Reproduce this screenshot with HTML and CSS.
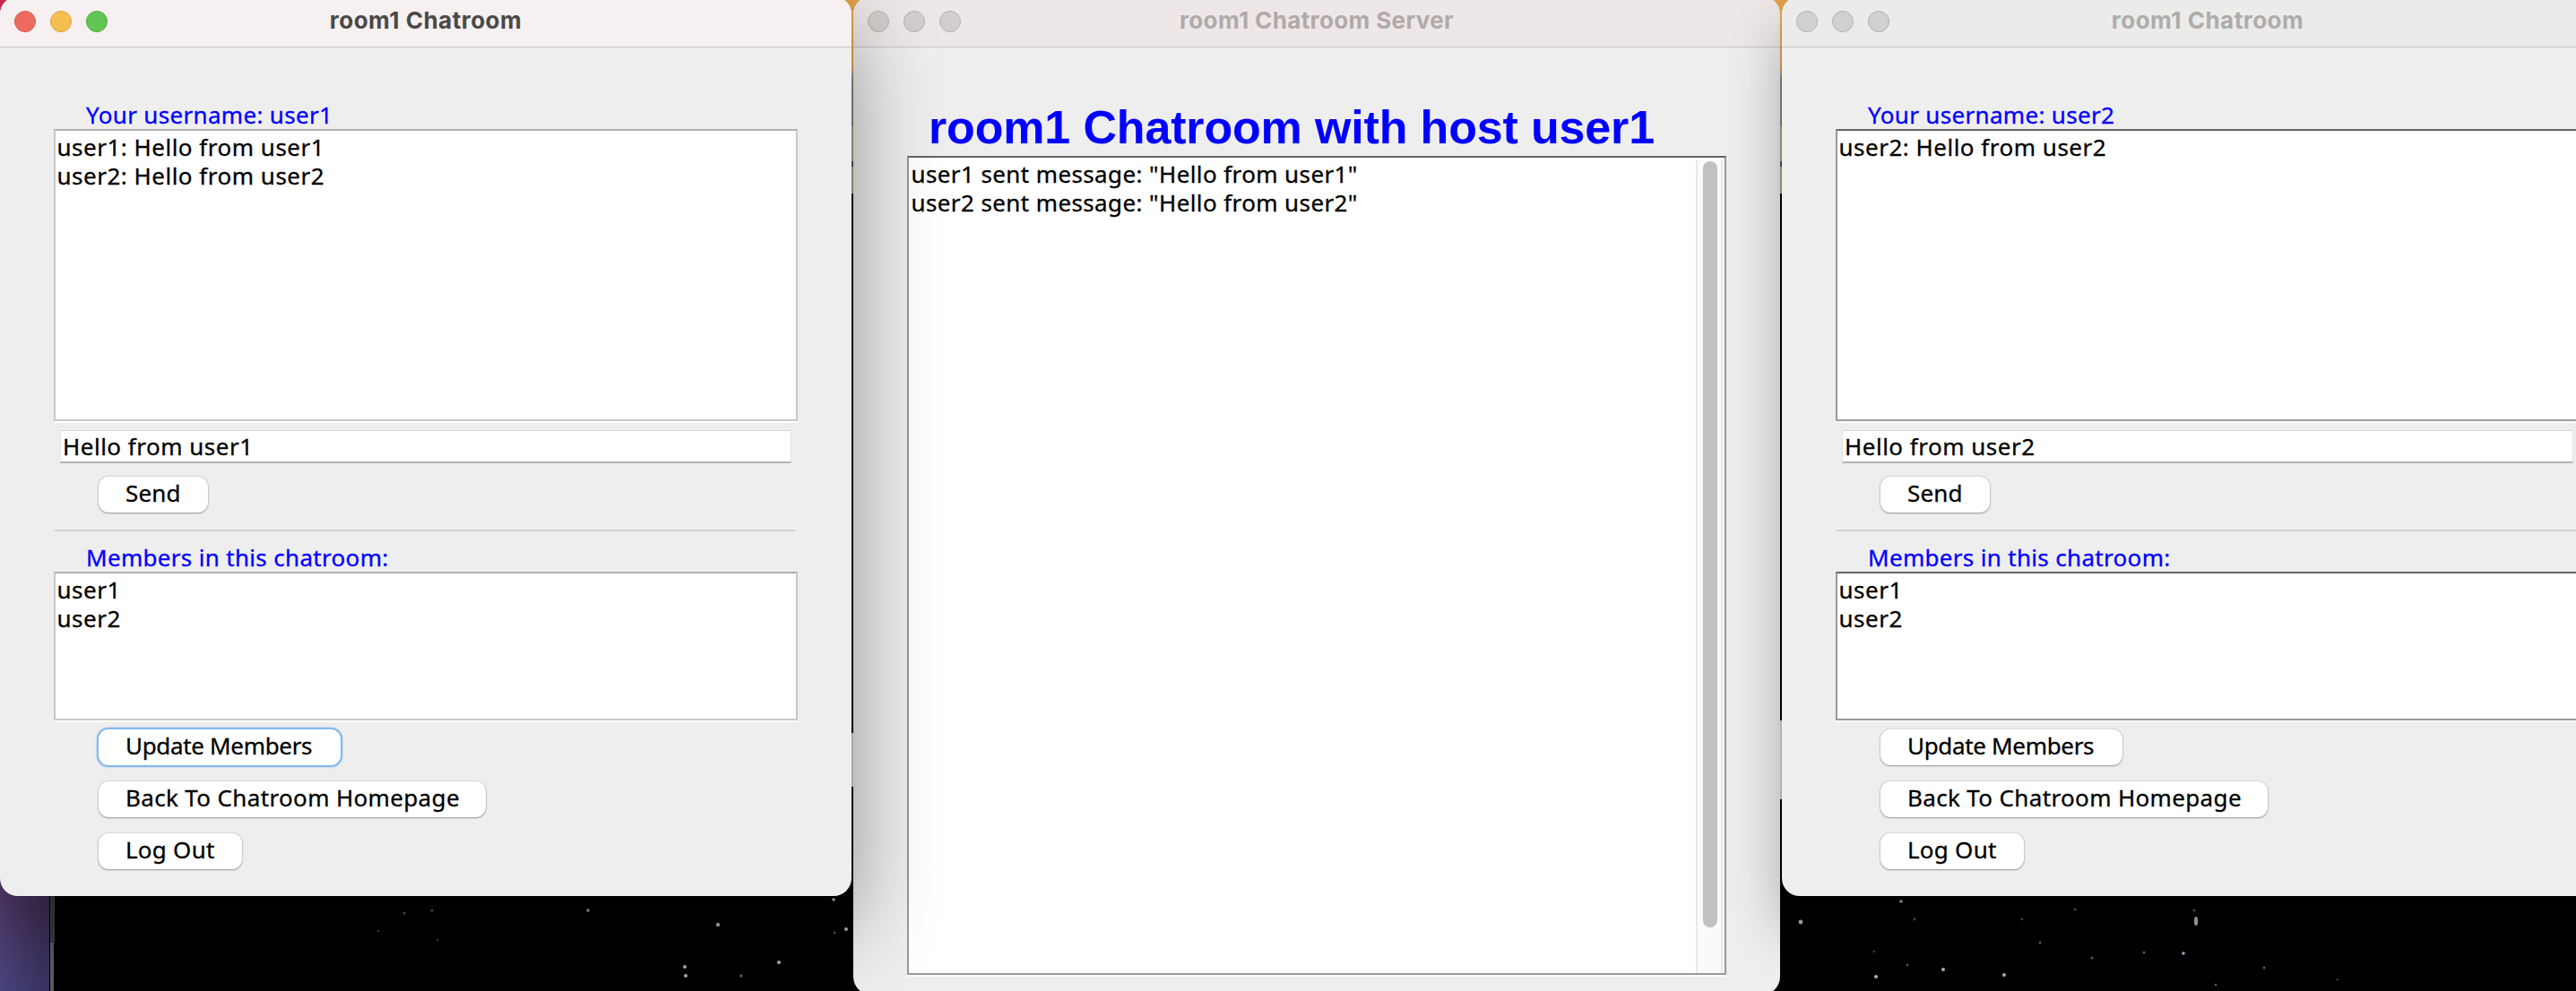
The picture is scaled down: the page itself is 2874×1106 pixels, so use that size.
FILE: index.html
```
<!DOCTYPE html>
<html lang="en">
<head>
<meta charset="utf-8">
<title>room1 Chatroom</title>
<link rel="stylesheet" href="styles.css">
</head>
<body>
<main class="desktop">
  <svg class="wallpaper" width="2874" height="1106" viewBox="0 0 2874 1106" aria-hidden="true">
    <defs>
      <linearGradient id="dusk" x1="0" y1="0" x2="0" y2="1">
        <stop offset="0" stop-color="#583a68"/><stop offset="1" stop-color="#4a4480"/>
      </linearGradient>
      <linearGradient id="edge" x1="0" y1="0" x2="1" y2="0">
        <stop offset="0" stop-color="#000" stop-opacity="0"/><stop offset="1" stop-color="#000" stop-opacity=".25"/>
      </linearGradient>
    </defs>
    <rect width="2874" height="1106" fill="#020102"/>
    <rect width="14" height="24" fill="#d4284e"/>
    <rect y="960" width="55" height="146" fill="url(#dusk)"/>
    <rect y="960" width="55" height="146" fill="url(#edge)"/>
    <rect x="56" y="960" width="5" height="92" fill="#3a3f3f"/>
    <rect x="56" y="1052" width="4" height="54" fill="#5a5f5f"/>
    <g id="gap">
      <rect x="938" width="26" height="78" fill="#e2a24c"/>
      <rect x="950" y="78" width="2" height="8" fill="#a89c88"/>
      <rect x="950" y="86" width="2" height="55" fill="#8d8373"/>
      <rect x="950" y="141" width="2" height="75" fill="#b09f82"/>
      <rect x="950" y="180" width="2" height="6" fill="#4b5060"/>
    </g>
    <use href="#gap" x="1036"/>
    <rect x="950" y="818" width="2" height="60" fill="#cfcfcf"/>
    <rect x="1986" y="804" width="2" height="88" fill="#cfcfcf"/>
    <g fill="#5c5c64">
      <circle cx="451" cy="1019" r="1.5"/><circle cx="482" cy="1016" r="1.5"/><circle cx="422" cy="1039" r="1"/>
      <circle cx="488" cy="1049" r="1"/><circle cx="827" cy="1089" r="1.8"/><circle cx="931" cy="1041" r="1.3"/>
      <circle cx="2136" cy="1026" r="1.4"/><circle cx="2315" cy="1015" r="1.5"/><circle cx="2256" cy="1026" r="1.3"/>
      <circle cx="2448" cy="1016" r="1.5"/><circle cx="2276" cy="1052" r="1.5"/><circle cx="2392" cy="1063" r="1.5"/>
      <circle cx="2334" cy="1069" r="1.5"/><circle cx="2526" cy="1080" r="1.5"/><circle cx="2472" cy="1099" r="1.3"/>
      <circle cx="2128" cy="1077" r="1.2"/><circle cx="2608" cy="1093" r="1"/><circle cx="2091" cy="1062" r="1"/>
    </g>
    <g fill="#adadbd">
      <circle cx="656" cy="1016" r="1.7"/><circle cx="801" cy="1032" r="2.2"/><circle cx="930" cy="1004" r="1.8"/>
      <circle cx="944" cy="1037" r="2"/><circle cx="869" cy="1074" r="2.1"/><circle cx="764" cy="1079" r="2"/>
      <circle cx="765" cy="1089" r="2"/><circle cx="2121" cy="1006" r="1.8"/><circle cx="2009" cy="1029" r="2.4"/>
      <circle cx="2436" cy="1064" r="1.8"/><circle cx="2168" cy="1082" r="2"/><circle cx="2093" cy="1090" r="2.1"/>
      <circle cx="2236" cy="1088" r="2"/><ellipse cx="2450" cy="1028" rx="2.2" ry="5"/>
    </g>
  </svg>

  <section class="window window-server">
    <header class="titlebar">
      <span class="lights"><i class="light"></i><i class="light"></i><i class="light"></i></span>
      <h2 class="title title-long">room1 Chatroom Server</h2>
    </header>
    <div class="pane">
      <h1 class="heading">room1 Chatroom with host user1</h1>
      <div class="textarea log">
        <div class="lines server-lines"><p>user1 sent message: "Hello from user1"</p><p>user2 sent message: "Hello from user2"</p></div>
        <div class="scrollbar"><div class="thumb"></div></div>
      </div>
    </div>
  </section>

  <section class="window window-user1">
    <header class="titlebar">
      <span class="lights"><i class="light close"></i><i class="light minimize"></i><i class="light zoom"></i></span>
      <h2 class="title">room1 Chatroom</h2>
    </header>
    <div class="pane">
      <p class="label">Your username: user1</p>
      <div class="textarea chat"><div class="lines"><p>user1: Hello from user1</p><p>user2: Hello from user2</p></div></div>
      <div class="field">Hello from user1</div>
      <button class="button send">Send</button>
      <hr class="separator">
      <p class="label">Members in this chatroom:</p>
      <div class="textarea members"><div class="lines"><p>user1</p><p>user2</p></div></div>
      <div class="actions">
        <button class="button update focused">Update Members</button>
        <button class="button back">Back To Chatroom Homepage</button>
        <button class="button logout">Log Out</button>
      </div>
    </div>
  </section>

  <section class="window window-user2">
    <header class="titlebar">
      <span class="lights"><i class="light"></i><i class="light"></i><i class="light"></i></span>
      <h2 class="title">room1 Chatroom</h2>
    </header>
    <div class="pane">
      <p class="label">Your username: user2</p>
      <div class="textarea chat"><div class="lines"><p>user2: Hello from user2</p></div></div>
      <div class="field">Hello from user2</div>
      <button class="button send">Send</button>
      <hr class="separator">
      <p class="label">Members in this chatroom:</p>
      <div class="textarea members"><div class="lines"><p>user1</p><p>user2</p></div></div>
      <div class="actions">
        <button class="button update">Update Members</button>
        <button class="button back">Back To Chatroom Homepage</button>
        <button class="button logout">Log Out</button>
      </div>
    </div>
  </section>
</main>
</body>
</html>
```
FILE: styles.css
```
* { box-sizing: border-box; }
body, p, h1, h2 { margin: 0; }
body { overflow: hidden; font: 26px/32px "Noto Sans", "Open Sans", sans-serif; color: #000; }

.desktop { position: relative; width: 2874px; height: 1106px; overflow: hidden; }
.wallpaper { display: block; }

/* Windows */
.window { position: absolute; top: -4px; width: 950px; height: 1004px; border-radius: 20px; background: #eee; }
.window-user1 { left: 0; box-shadow: 0 36px 96px rgba(0, 0, 0, .4); }
.window-user2 { left: 1988px; box-shadow: 0 36px 60px rgba(0, 0, 0, .3); }
.window-server { left: 952px; width: 1034px; height: 1114px; }

.titlebar { display: grid; grid-template-columns: 150px 1fr 150px; align-items: start; height: 57px; padding-top: 4px; border-bottom: 1px solid #c6c5c4; border-radius: 20px 20px 0 0; background: #ecebe9; }
.window-user1 .titlebar { background: #f6f0f0; }
.window-server .titlebar { background: #eee7e7; }
.lights { display: flex; gap: 16px; padding: 12px 0 0 16px; }
.light { width: 24px; height: 24px; border: 1px solid #b3b1b0; border-radius: 50%; background: #d2d1cf; }
.window-server .light { border-color: #b5b0b0; background: #d3cdcd; }
.window-user1 .close { border-color: #d8584d; background: #ec6a5e; }
.window-user1 .minimize { border-color: #d9a33f; background: #f4bf4f; }
.window-user1 .zoom { border-color: #52a942; background: #61c554; }
.title { text-align: center; font: 700 26px/46px Inter, sans-serif; letter-spacing: .5px; color: #aeacab; }
.title-long { letter-spacing: .37px; color: #b0aaaa; }
.window-user1 .title { color: #4a4848; }

/* Contents */
.pane { display: flex; flex-direction: column; align-items: flex-start; padding: 59px 60px 0; -webkit-text-stroke: .3px currentColor; }
.label { margin-left: 36px; color: #00f; letter-spacing: .32px; }
.heading { margin: 0 0 2px 24px; font: 700 52px/60px "Liberation Sans", Arial, sans-serif; letter-spacing: -.16px; white-space: nowrap; color: #00f; -webkit-text-stroke: 0; }

.textarea { display: flex; width: 830px; border: 2px solid #999; border-top-color: #646464; background: #fff; box-shadow: 0 2px #fff; }
.window-user1 .textarea { border-color: #b0b0b0 #c8c8c8 #c8c8c8; }
.lines { flex: 1; padding: 2px 0 0 1.5px; letter-spacing: .5px; }
.server-lines { padding-left: 2.5px; letter-spacing: .39px; }
.chat { height: 326px; }
.members { height: 166px; }
.log { width: 914px; height: 914px; }

.scrollbar { width: 30px; margin: 2px 2px 0 0; padding: 2px 0 0 6px; border: solid #e8e8e8; border-width: 0 2px; background: #fafafa; }
.thumb { width: 16px; height: 855px; border-radius: 8px; background: #c1c1c1; }

.field { width: 816px; height: 37px; margin: 10px 0 15px 7px; padding-left: 2px; border: 1px solid #e2e2e2; border-top-color: #d6d6d6; border-bottom: 2px solid #b4b4b4; background: #fff; line-height: 34px; letter-spacing: .5px; }

.button { height: 40px; margin: 0 0 0 50px; padding: 0 0 4px 30px; border: 0; border-radius: 11px; background: #fff; box-shadow: 0 0 2px rgba(0, 0, 0, .28), 0 1px 2px rgba(0, 0, 0, .3); font: inherit; line-height: 36px; text-align: left; white-space: nowrap; color: #000; -webkit-text-stroke: .3px #000; }
.send { width: 122px; letter-spacing: .2px; }
.update { width: 270px; letter-spacing: -.33px; }
.back { width: 432px; letter-spacing: .35px; }
.logout { width: 160px; letter-spacing: .25px; }
.focused { box-shadow: 0 0 0 2px #85b8ee, 0 0 2px 2px #85b8ee; }
.separator { width: 826px; height: 2px; margin: 19px 0 13px 1px; border: 0; background: #d2d2d2; }
.actions { display: flex; flex-direction: column; align-items: flex-start; gap: 18px; margin-top: 10px; }
```
